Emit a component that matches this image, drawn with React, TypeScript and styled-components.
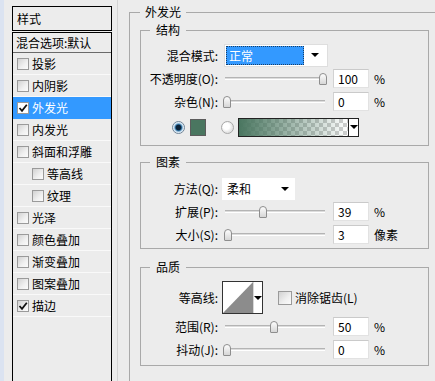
import React from "react";
import styled, { createGlobalStyle } from "styled-components";

const Global = createGlobalStyle`
  html, body { margin: 0; padding: 0; background: #ececec; }
  body {
    font-family: "Noto Sans CJK SC", "Liberation Sans", sans-serif;
    font-size: 12px;
    color: #000;
    overflow: hidden;
  }
  * { box-sizing: border-box; }
`;

const Root = styled.div`
  display: flex;
  width: 435px;
  height: 381px;
  overflow: hidden;
  background: #ececec;
`;

/* ---------- left list ---------- */
const LeftPane = styled.div`
  flex: 0 0 118px;
  width: 118px;
  height: 100%;
  border-left: 4px solid #dbe3f1;
  border-right: 1px solid #d4d4d4;
  padding: 6px 0 0 8px;
  display: flex;
  flex-direction: column;
  overflow: hidden;
`;

const TitleBox = styled.div`
  width: 100px;
  height: 25px;
  border: 1px solid #000;
  padding-left: 4px;
  line-height: 23px;
`;

const ListBox = styled.div`
  width: 100px;
  margin-top: 1px;
  margin-bottom: -2px;
  flex: 1;
  border: 1px solid #000;
  display: flex;
  flex-direction: column;
`;

const BlendItem = styled.div`
  height: 20px;
  line-height: 19px;
  padding-left: 3px;
  border-bottom: 1px solid #6a6a6a;
  white-space: nowrap;
`;

const StyleRow = styled.div<{ $indent?: boolean; $selected?: boolean }>`
  height: 22px;
  display: flex;
  align-items: center;
  gap: 3px;
  padding-left: ${(p) => (p.$indent ? 19 : 4)}px;
  background: ${(p) => (p.$selected ? "#3399ff" : "transparent")};
  color: ${(p) => (p.$selected ? "#fff" : "#000")};
  border-bottom: 1px solid ${(p) => (p.$selected ? "#3399ff" : "#f9f9f9")};
  white-space: nowrap;
`;

const CheckBox = styled.span<{ $size?: number; $light?: boolean }>`
  flex: 0 0 auto;
  width: ${(p) => p.$size ?? 12}px;
  height: ${(p) => p.$size ?? 12}px;
  border: 1px solid #9a9a9a;
  background: ${(p) =>
    p.$light ? "#ffffff" : "linear-gradient(135deg, #d2d2d2 0%, #f0f0f0 60%, #fbfbfb 100%)"};
  display: flex;
  align-items: center;
  justify-content: center;
`;

const Check = () => (
  <svg width="10" height="10" viewBox="0 0 10 10">
    <path d="M1.5 5 L4 7.8 L8.8 1.8" fill="none" stroke="#111" strokeWidth="1.8" />
  </svg>
);

/* ---------- right groups ---------- */
const RightPane = styled.div`
  flex: 1;
  height: 100%;
  padding: 5px 0 0 11px;
  overflow: hidden;
`;

const OuterGroup = styled.fieldset`
  margin: 0;
  width: 330px;
  height: 420px;
  min-inline-size: 0;
  border: 1px solid #a9a9a9;
  padding: 4px 0 0 10px;
`;

const OuterLegend = styled.legend`
  padding: 0 5px;
  margin: 0;
  line-height: 14px;
  font-size: 12px;
`;

const InnerGroup = styled.fieldset<{ $top: number; $pt: number; $pb: number }>`
  margin: ${(p) => p.$top}px 0 0 0;
  width: 289px;
  min-inline-size: 0;
  border: 1px solid #a9a9a9;
  padding: ${(p) => p.$pt}px 0 ${(p) => p.$pb}px 0;
`;

const InnerLegend = styled.legend`
  margin-left: 9px;
  padding: 0 6px;
  line-height: 14px;
  font-size: 12px;
`;

const Row = styled.div<{ $h: number }>`
  display: grid;
  grid-template-columns: 77px auto;
  column-gap: 5px;
  align-items: center;
  height: ${(p) => p.$h}px;
`;

const Label = styled.span`
  text-align: right;
  white-space: nowrap;
`;

const Controls = styled.div`
  display: flex;
  align-items: center;
`;

const Triangle = styled.span`
  width: 0;
  height: 0;
  border-left: 4px solid transparent;
  border-right: 4px solid transparent;
  border-top: 4px solid #000;
`;

const BlendSelect = styled.div`
  margin-left: 1px;
  width: 104px;
  height: 23px;
  background: #fff;
  border: 1px solid #dedede;
  padding: 1px;
  display: flex;
`;

const Highlight = styled.div`
  width: 78px;
  height: 100%;
  background: #3399ff;
  color: #fff;
  border: 1px dotted #1a3f66;
  padding-left: 2px;
  line-height: 17px;
`;

const ArrowCell = styled.div<{ $w?: number; $sep?: string }>`
  flex: ${(p) => (p.$w ? `0 0 ${p.$w}px` : "1")};
  display: flex;
  align-items: center;
  justify-content: center;
  background: #fff;
  border-left: ${(p) => (p.$sep ? `1px solid ${p.$sep}` : "none")};
`;

const MethodSelect = styled.div`
  margin-left: -1px;
  width: 73px;
  height: 22px;
  background: #fff;
  display: flex;
  align-items: center;
  justify-content: space-between;
  padding: 0 6px 0 5px;
`;

const Slider = styled.div`
  position: relative;
  width: 104px;
  height: 14px;
  display: flex;
  align-items: center;
`;

const Track = styled.div`
  margin: 0 2px;
  flex: 1;
  height: 3px;
  border-top: 1px solid #b4b4b4;
  border-bottom: 1px solid #ffffff;
  background: #dcdcdc;
`;

const Thumb = styled.span`
  position: absolute;
  top: 1px;
  width: 8px;
  height: 12px;
  border: 1px solid #8e8e8e;
  border-radius: 4px 4px 1px 1px;
  background: linear-gradient(#fdfdfd, #d6d6d6);
`;

const NumInput = styled.input`
  margin-left: 6px;
  width: 36px;
  height: 19px;
  background: #fff;
  border: 1px solid #e2e2e2;
  border-top-color: #cacaca;
  border-left-color: #d2d2d2;
  padding: 0 0 0 4px;
  font: inherit;
  font-size: 12px;
  color: #000;
  outline: none;
`;

const Unit = styled.span`
  margin-left: 5px;
  white-space: nowrap;
`;

const ColorRow = styled.div`
  height: 28px;
  display: flex;
  align-items: center;
  padding-left: 31px;
`;

const Radio = styled.span<{ $on?: boolean; $ml?: number }>`
  flex: 0 0 13px;
  width: 13px;
  height: 13px;
  margin-left: ${(p) => p.$ml ?? 0}px;
  border-radius: 50%;
  border: 1px solid ${(p) => (p.$on ? "#6f8497" : "#a8a8a8")};
  background: ${(p) =>
    p.$on
      ? "radial-gradient(circle, #0b2238 0 2.4px, #2f6f9f 3.2px, #b9d6ec 4.4px, #f4f8fb 5.5px)"
      : "radial-gradient(circle at 40% 40%, #ffffff 0 3px, #e4e4e4 6px)"};
`;

const Swatch = styled.span`
  margin-left: 5px;
  width: 16px;
  height: 17px;
  background: #4a7660;
  border: 1px solid #5c5c5c;
`;

const GradientBox = styled.div`
  margin-left: 4px;
  width: 121px;
  height: 19px;
  border: 1px solid #222;
  display: flex;
`;

const GradientFill = styled.div`
  flex: 1;
  background-image: linear-gradient(to right, rgba(74, 118, 96, 1), rgba(74, 118, 96, 0)),
    linear-gradient(45deg, #cfcfcf 25%, transparent 25%, transparent 75%, #cfcfcf 75%),
    linear-gradient(45deg, #cfcfcf 25%, #ffffff 25%, #ffffff 75%, #cfcfcf 75%);
  background-size: 100% 100%, 8px 8px, 8px 8px;
  background-position: 0 0, 0 0, 4px 4px;
`;

const ContourBox = styled.div`
  margin-left: -1px;
  width: 41px;
  height: 33px;
  border: 1px solid #333;
  background: #fff;
  display: flex;
`;

const CheckText = styled.span`
  margin-left: 3px;
  white-space: nowrap;
`;

const styleItems: { name: string; checked?: boolean; indent?: boolean; selected?: boolean }[] = [
  { name: "投影" },
  { name: "内阴影" },
  { name: "外发光", checked: true, selected: true },
  { name: "内发光" },
  { name: "斜面和浮雕" },
  { name: "等高线", indent: true },
  { name: "纹理", indent: true },
  { name: "光泽" },
  { name: "颜色叠加" },
  { name: "渐变叠加" },
  { name: "图案叠加" },
  { name: "描边", checked: true },
];

const SliderField = ({ value, frac, unit }: { value: string; frac: number; unit: string }) => (
  <Controls>
    <Slider>
      <Track />
      <Thumb style={{ left: `${Math.round(frac * 96)}px` }} />
    </Slider>
    <NumInput readOnly value={value} />
    <Unit>{unit}</Unit>
  </Controls>
);

export default function App() {
  return (
    <Root>
      <Global />
      <LeftPane>
        <TitleBox>样式</TitleBox>
        <ListBox>
          <BlendItem>混合选项:默认</BlendItem>
          {styleItems.map((it) => (
            <StyleRow key={it.name} $indent={it.indent} $selected={it.selected}>
              <CheckBox $light={it.selected}>{it.checked ? <Check /> : null}</CheckBox>
              <span>{it.name}</span>
            </StyleRow>
          ))}
        </ListBox>
      </LeftPane>

      <RightPane>
        <OuterGroup>
          <OuterLegend>外发光</OuterLegend>

          <InnerGroup $top={0} $pt={6} $pb={4}>
            <InnerLegend>结构</InnerLegend>
            <Row $h={24}>
              <Label>混合模式:</Label>
              <Controls>
                <BlendSelect>
                  <Highlight>正常</Highlight>
                  <ArrowCell>
                    <Triangle />
                  </ArrowCell>
                </BlendSelect>
              </Controls>
            </Row>
            <Row $h={23}>
              <Label>不透明度(O):</Label>
              <SliderField value="100" frac={1} unit="%" />
            </Row>
            <Row $h={23}>
              <Label>杂色(N):</Label>
              <SliderField value="0" frac={0} unit="%" />
            </Row>
            <ColorRow>
              <Radio $on />
              <Swatch />
              <Radio $ml={15} />
              <GradientBox>
                <GradientFill />
                <ArrowCell $w={10} $sep="#222">
                  <Triangle />
                </ArrowCell>
              </GradientBox>
            </ColorRow>
          </InnerGroup>

          <InnerGroup $top={9} $pt={8} $pb={2}>
            <InnerLegend>图素</InnerLegend>
            <Row $h={23}>
              <Label>方法(Q):</Label>
              <Controls>
                <MethodSelect>
                  <span>柔和</span>
                  <Triangle />
                </MethodSelect>
              </Controls>
            </Row>
            <Row $h={23}>
              <Label>扩展(P):</Label>
              <SliderField value="39" frac={0.37} unit="%" />
            </Row>
            <Row $h={23}>
              <Label>大小(S):</Label>
              <SliderField value="3" frac={0.01} unit="像素" />
            </Row>
          </InnerGroup>

          <InnerGroup $top={11} $pt={6} $pb={4}>
            <InnerLegend>品质</InnerLegend>
            <Row $h={35}>
              <Label>等高线:</Label>
              <Controls>
                <ContourBox>
                  <svg width="30" height="31" viewBox="0 0 30 31">
                    <polygon points="0,31 30,0 30,31" fill="#8c8c8c" />
                  </svg>
                  <ArrowCell $w={9} $sep="#d8d8d8">
                    <Triangle />
                  </ArrowCell>
                </ContourBox>
                <CheckBox $size={14} style={{ marginLeft: 15 }} />
                <CheckText>消除锯齿(L)</CheckText>
              </Controls>
            </Row>
            <Row $h={23}>
              <Label>范围(R):</Label>
              <SliderField value="50" frac={0.49} unit="%" />
            </Row>
            <Row $h={23}>
              <Label>抖动(J):</Label>
              <SliderField value="0" frac={0} unit="%" />
            </Row>
          </InnerGroup>
        </OuterGroup>
      </RightPane>
    </Root>
  );
}
